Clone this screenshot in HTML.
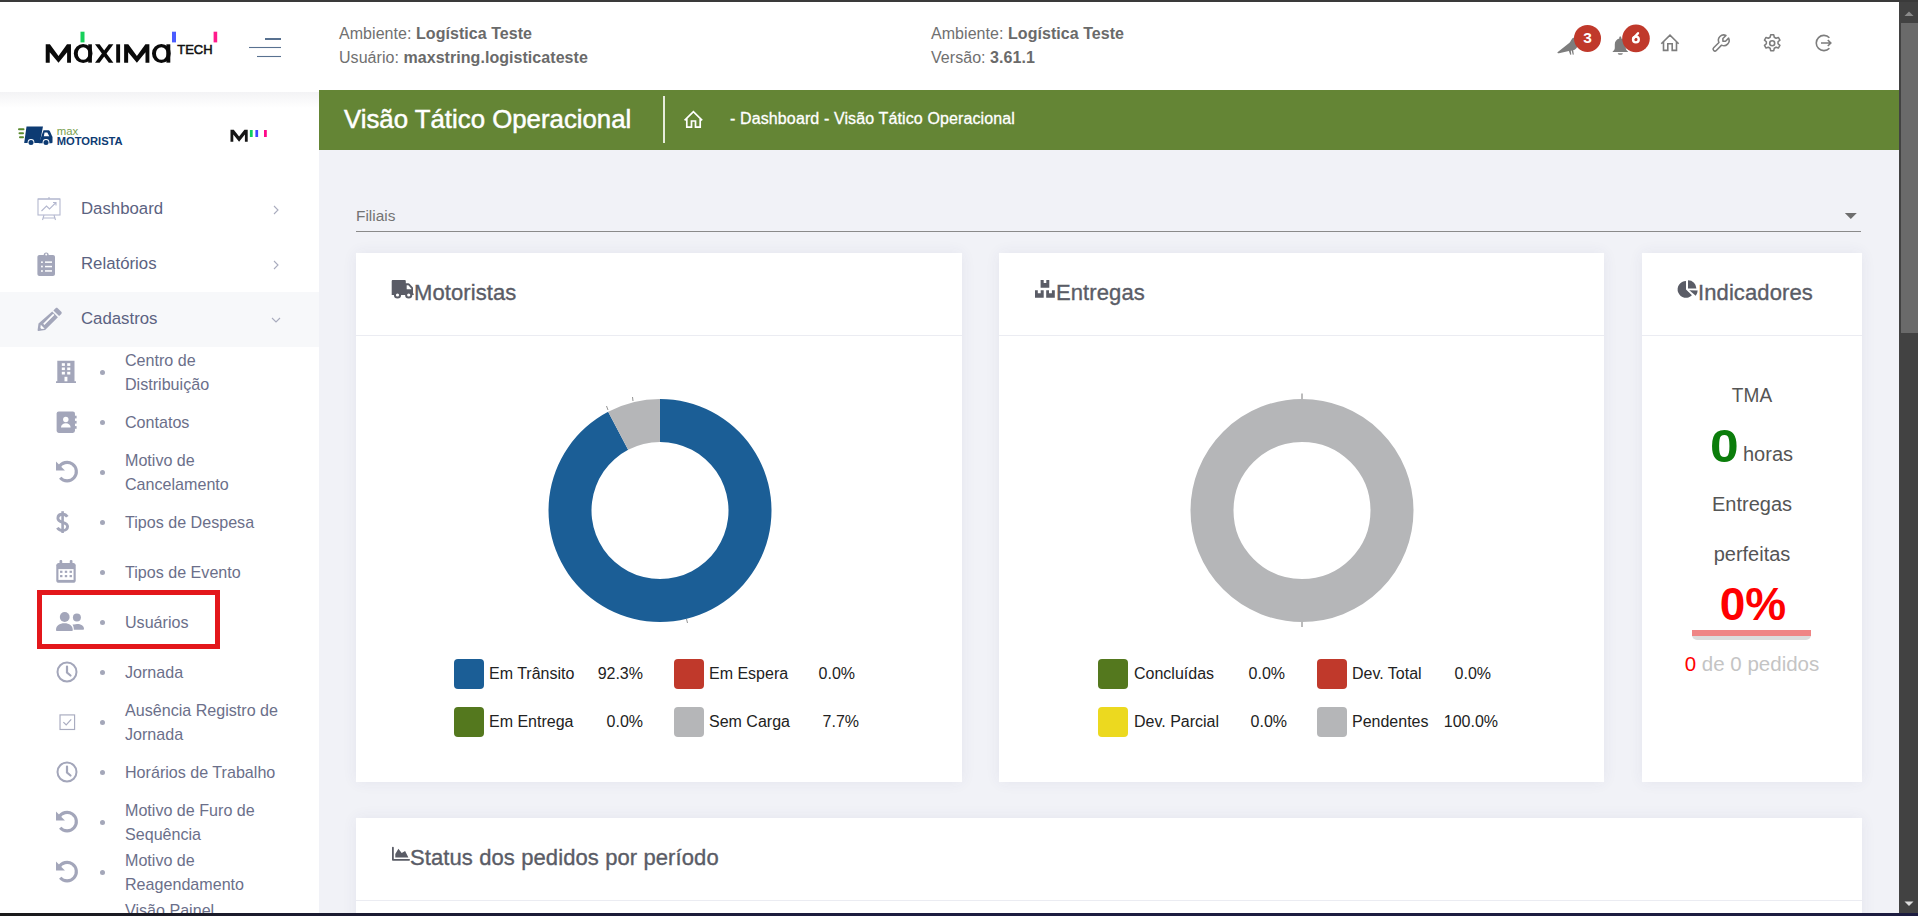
<!DOCTYPE html>
<html><head><meta charset="utf-8">
<style>
*{margin:0;padding:0;box-sizing:border-box}
html,body{width:1918px;height:916px;overflow:hidden;background:#f1f2f7;font-family:"Liberation Sans",sans-serif}
.a{position:absolute}
.t{position:absolute;white-space:nowrap;line-height:1}
#topb{left:0;top:0;width:1918px;height:2px;background:#3a3a3a}
#botb{left:0;top:913px;width:1918px;height:3px;background:linear-gradient(90deg,#1a1a1a 0,#1b1b30 300px,#1c1c40 900px)}
#hdr{left:0;top:2px;width:1899px;height:88px;background:#fff}
#side{left:0;top:90px;width:319px;height:823px;background:#fff}
#sb{left:1899px;top:2px;width:19px;height:911px;background:#424242}
#green{left:319px;top:90px;width:1580px;height:60px;background:#648535}
.card{position:absolute;background:#fff;box-shadow:0 0 14px rgba(60,60,110,.07)}
.hd{color:#707070;font-size:16px;letter-spacing:.05px}
.hd b{color:#6a6a6a;font-weight:bold}
.mi{color:#5b6281;font-size:16.8px}
.si{color:#6b6f8a;font-size:16.1px;line-height:24px}
.dot{position:absolute;width:5px;height:5px;border-radius:50%;background:#a4a7b9}
.ct{color:#5a5c66;font-size:22px;letter-spacing:.1px;-webkit-text-stroke:.35px #5a5c66}
.lg{color:#222;font-size:16px}
.sq{position:absolute;width:30px;height:30px;border-radius:4px}
</style></head><body>
<div id="topb" class="a"></div>
<div id="hdr" class="a"></div>
<div id="side" class="a"></div>

<!-- SIDEBAR -->
<div class="a" style="left:0;top:91.5px;width:319px;height:16px;background:linear-gradient(#f3f3f5,rgba(255,255,255,0))"></div>
<svg class="a" style="left:0;top:110px" width="319" height="50" viewBox="0 110 319 50">
 <g fill="#5a8a2e">
  <rect x="18" y="128.3" width="6.5" height="2" rx="1"/>
  <rect x="18.5" y="132.2" width="5.5" height="2" rx="1"/>
  <rect x="19" y="136.2" width="5" height="2" rx="1"/>
 </g>
 <g fill="#0d3b73">
  <path d="M26.5 126.5 h16.5 l-3.2 16.5 h-15.6 z"/>
  <path d="M43.5 130.3 h4.5 c1 0 1.6 .5 2 1.3 l2.5 5.5 v5 c0 .8-.5 1.2-1.2 1.2 h-12.5 z"/>
  <circle cx="31" cy="142.5" r="2.3"/>
  <circle cx="46" cy="142.5" r="2.3"/>
 </g>
 <path fill="#fff" d="M44.5 132.5 h2.8 l2 3.8 h-5.5 z"/>
 <g fill="#fff"><circle cx="31" cy="142.5" r="3.4"/><circle cx="46" cy="142.5" r="3.4"/></g><g fill="#0d3b73"><circle cx="31" cy="142.5" r="2.5"/><circle cx="46" cy="142.5" r="2.5"/></g>
 <text x="56.7" y="135.3" font-family="Liberation Sans" font-size="11.5" fill="#79a04e" textLength="21.5" lengthAdjust="spacingAndGlyphs">max</text>
 <text x="56.7" y="144.6" font-family="Liberation Sans" font-weight="bold" font-size="11.3" fill="#0d3b73" textLength="66" lengthAdjust="spacingAndGlyphs">MOTORISTA</text>
 <polygon fill="#161616" points="230.5,141.8 230.5,129.8 233.8,129.8 239.1,136.4 244.4,129.8 247.7,129.8 247.7,141.8 244.9,141.8 244.9,134.5 239.1,141.8 233.3,134.5 233.3,141.8"/>
 <rect x="249.9" y="130" width="2.8" height="7" fill="#10d060"/>
 <rect x="255.4" y="130" width="2.7" height="7" fill="#4048ff"/>
 <rect x="264" y="130" width="2.8" height="7" fill="#ff0a8a"/>
</svg>
<div class="a" style="left:0;top:292px;width:319px;height:55px;background:#f7f8fa"></div>
<!-- main menu icons -->
<svg class="a" style="left:0;top:180px" width="319" height="170" viewBox="0 180 319 170">
 <g fill="none" stroke="#b4b8cf" stroke-width="1.1">
  <rect x="38" y="199" width="22" height="16"/>
  <path d="M38 199 h22 M49 197 v2 M44 215 l-1.5 5 M54 215 l1.5 5 M43 218 h12 M41.5 211 l5 -5 l3 3 l6.5 -6.5 M53 202.5 h3 v3"/>
 </g>
 <g fill="#a3a6ba">
  <path d="M37.4 257 c0-1.1 .9-2 2-2 h4.3 a2.5 2.5 0 0 1 5 0 h4.3 c1.1 0 2 .9 2 2 v17 c0 1.1-.9 2-2 2 h-13.6 c-1.1 0-2-.9-2-2z"/>
 </g>
 <g fill="#fff">
  <rect x="41" y="261.2" width="1.9" height="1.9" rx=".9"/><rect x="45" y="261.4" width="7" height="1.5"/>
  <rect x="41" y="265.6" width="1.9" height="1.9" rx=".9"/><rect x="45" y="265.8" width="7" height="1.5"/>
  <rect x="41" y="270" width="1.9" height="1.9" rx=".9"/><rect x="45" y="270.2" width="7" height="1.5"/>
  <circle cx="46.2" cy="254.6" r="1"/>
 </g>
 <g transform="translate(1.2 -1.8)"><g fill="#a3a6ba">
  <path d="M56.5 310 l3.6 3.6 c.6.6 .6 1.5 0 2.1 l-2.2 2.2 l-5.7 -5.7 l2.2 -2.2 c.6-.6 1.5-.6 2.1 0z"/>
  <path d="M51 313.4 l5.7 5.7 l-12.8 12.8 l-6.6 .9 c-.6 .1-1-.3-.9-.9 l.9-6.6z"/>
 </g>
 <path fill="#fff" d="M39.6 326.6 l3.9 3.9 l-3.2 .4 l-1.1 -1.1z"/>
 <path fill="#fff" d="M42 325.5 l10 -10 l1.2 1.2 l-10 10z"/>
 </g>
 <g fill="none" stroke="#a9acbe" stroke-width="1.1">
  <path d="M274 206 l4 4 l-4 4"/>
  <path d="M274 261 l4 4 l-4 4"/>
  <path d="M272 318 l4 4 l4 -4"/>
 </g>
</svg>
<div class="t mi" style="left:81px;top:200.5px">Dashboard</div>
<div class="t mi" style="left:81px;top:255.5px">Relatórios</div>
<div class="t mi" style="left:81px;top:310.5px">Cadastros</div>
<div class="a" style="left:0;top:1px;width:319px;height:900px">
<!-- SUBMENU -->
<div class="t si" style="left:125px;top:347px;line-height:24px">Centro de<br>Distribuição</div>
<div class="dot" style="left:100px;top:369px"></div>
<div class="t si" style="left:125px;top:409px;line-height:24px">Contatos</div>
<div class="dot" style="left:100px;top:419px"></div>
<div class="t si" style="left:125px;top:447px;line-height:24px">Motivo de<br>Cancelamento</div>
<div class="dot" style="left:100px;top:469px"></div>
<div class="t si" style="left:125px;top:509px;line-height:24px">Tipos de Despesa</div>
<div class="dot" style="left:100px;top:519px"></div>
<div class="t si" style="left:125px;top:559px;line-height:24px">Tipos de Evento</div>
<div class="dot" style="left:100px;top:569px"></div>
<div class="t si" style="left:125px;top:609px;line-height:24px">Usuários</div>
<div class="dot" style="left:100px;top:619px"></div>
<div class="t si" style="left:125px;top:659px;line-height:24px">Jornada</div>
<div class="dot" style="left:100px;top:669px"></div>
<div class="t si" style="left:125px;top:697px;line-height:24px">Ausência Registro de<br>Jornada</div>
<div class="dot" style="left:100px;top:719px"></div>
<div class="t si" style="left:125px;top:759px;line-height:24px">Horários de Trabalho</div>
<div class="dot" style="left:100px;top:769px"></div>
<div class="t si" style="left:125px;top:797px;line-height:24px">Motivo de Furo de<br>Sequência</div>
<div class="dot" style="left:100px;top:819px"></div>
<div class="t si" style="left:125px;top:847px;line-height:24px">Motivo de<br>Reagendamento</div>
<div class="dot" style="left:100px;top:869px"></div>
<div class="t si" style="left:125px;top:897px;line-height:24px">Visão Painel</div>
<div class="dot" style="left:100px;top:918px"></div>
<svg class="a" style="left:0;top:340px" width="100" height="573" viewBox="0 340 100 573">
<g transform="translate(66 371)" fill="#a3a6ba"><path d="M-8.7 -11.3 h17.2 v20.6 h1.5 v1.6 h-20 v-1.6 h1.3z"/><g fill="#fff"><rect x="-4.2" y="-8.8" width="3.1" height="2.7"/><rect x="1.2" y="-8.8" width="3.1" height="2.7"/><rect x="-4.2" y="-4.5" width="3.1" height="2.6"/><rect x="1.2" y="-4.5" width="3.1" height="2.6"/><rect x="-4.2" y="-0.2" width="3.1" height="2.7"/><rect x="1.2" y="-0.2" width="3.1" height="2.7"/><rect x="-1.5" y="4.8" width="2.9" height="4.5"/></g></g>
<g transform="translate(65.8 421.2) scale(1.08)" fill="#a3a6ba"><rect x="-8.5" y="-10" width="17" height="20" rx="2"/><rect x="8.5" y="-6" width="1.5" height="2.5"/><rect x="8.5" y="-1.2" width="1.5" height="2.5"/><rect x="8.5" y="3.6" width="1.5" height="2.5"/><g fill="#fff"><circle cx="0" cy="-2.5" r="2.5"/><path d="M-4.5 5 c0-2.5 2-4 4.5-4 s4.5 1.5 4.5 4z"/></g></g>
<g transform="translate(66.5 471) scale(1.05)"><path fill="none" stroke="#a3a6ba" stroke-width="3" d="M-7.2 -4.5 A8.8 8.8 0 1 1 -6 5.5"/><path fill="#a3a6ba" d="M-10 -10 v8.5 h8.5z"/></g>
<g fill="none" stroke="#a3a6ba"><path stroke-width="2.9" d="M67.3 515.8 C66.3 514 64.6 513.2 62.6 513.2 C59.6 513.2 57.9 515 57.9 517.2 C57.9 522.4 67.6 520.2 67.6 525.6 C67.6 527.9 65.6 529.6 62.6 529.6 C60.4 529.6 58.5 528.6 57.4 526.8"/><path stroke-width="2.6" d="M62.6 510.2 V532"/></g>
<g transform="translate(66 570.8) scale(1.08)" fill="#a3a6ba"><path d="M-9 -6 c0-1.2 1-2.2 2.2-2.2 h13.6 c1.2 0 2.2 1 2.2 2.2 v14 c0 1.2-1 2.2-2.2 2.2 h-13.6 c-1.2 0-2.2-1-2.2-2.2z"/><rect x="-6" y="-11" width="2.5" height="4.5" rx="1"/><rect x="3.5" y="-11" width="2.5" height="4.5" rx="1"/><path fill="#fff" d="M-7 -2.5 h14 v10 h-14z"/><g><rect x="-5.5" y="-1" width="2.2" height="2"/><rect x="-1.1" y="-1" width="2.2" height="2"/><rect x="3.3" y="-1" width="2.2" height="2"/><rect x="-5.5" y="3" width="2.2" height="2"/><rect x="-1.1" y="3" width="2.2" height="2"/><rect x="3.3" y="3" width="2.2" height="2"/></g></g>
<g transform="translate(70 621)" fill="#a3a6ba"><circle cx="-5.3" cy="-5" r="4.9"/><path d="M-14 8 c0-4.3 3.5-6.7 8.4-6.7 s8.4 2.4 8.4 6.7 c0 .6-.5 1.1-1.1 1.1 h-14.6 c-.6 0-1.1-.5-1.1-1.1z"/><circle cx="6.9" cy="-4.5" r="4"/><path d="M4 2.6 c1-.4 2-.6 3-.6 c4 0 7 1.9 7 4.8 c0 .6-.5 1-1 1 h-9.2 c0-2-.2-3.7-1.3-5.2z"/></g>
<g transform="translate(67 671)"><circle r="9.5" fill="none" stroke="#a3a6ba" stroke-width="2"/><path fill="none" stroke="#a3a6ba" stroke-width="2.2" stroke-linecap="round" d="M0 -5.5 V0.5 L3.5 3.5"/></g>
<g transform="translate(67.3 721.2) scale(1.12)" fill="none" stroke="#a9acc0" stroke-width="1.05"><rect x="-6.5" y="-6.5" width="13" height="13"/><path d="M-3.5 0 l2.5 2.5 l4.5 -5"/></g>
<g transform="translate(67 771)"><circle r="9.5" fill="none" stroke="#a3a6ba" stroke-width="2"/><path fill="none" stroke="#a3a6ba" stroke-width="2.2" stroke-linecap="round" d="M0 -5.5 V0.5 L3.5 3.5"/></g>
<g transform="translate(66.5 821) scale(1.05)"><path fill="none" stroke="#a3a6ba" stroke-width="3" d="M-7.2 -4.5 A8.8 8.8 0 1 1 -6 5.5"/><path fill="#a3a6ba" d="M-10 -10 v8.5 h8.5z"/></g>
<g transform="translate(66.5 871) scale(1.05)"><path fill="none" stroke="#a3a6ba" stroke-width="3" d="M-7.2 -4.5 A8.8 8.8 0 1 1 -6 5.5"/><path fill="#a3a6ba" d="M-10 -10 v8.5 h8.5z"/></g>
<g transform="translate(70 922.5) scale(.95)" opacity=".8"><path fill="none" stroke="#a3a6ba" stroke-width="3" d="M-7.2 -4.5 A8.8 8.8 0 1 1 -6 5.5"/><path fill="#a3a6ba" d="M-10 -10 v8.5 h8.5z"/></g>
</svg>
</div>
<div class="a" style="left:37px;top:590px;width:183px;height:59px;border:5px solid #e3171b"></div>
<div id="green" class="a"></div>

<!-- LOGO -->
<svg class="a" style="left:0;top:0" width="320" height="90" viewBox="0 0 320 90">
 <g fill="#0a0a0a">
  <polygon points="45.73,62.65 45.73,44.3 49.9,44.3 58.5,55.9 67,44.3 70.96,44.3 70.96,62.65 67.1,62.65 67.1,52.3 58.5,62.65 49.74,52.3 49.74,62.65"/>
  <polygon transform="translate(78.4 0)" points="45.73,62.65 45.73,44.3 49.9,44.3 58.5,55.9 67,44.3 70.96,44.3 70.96,62.65 67.1,62.65 67.1,52.3 58.5,62.65 49.74,52.3 49.74,62.65"/>
  <path fill-rule="evenodd" d="M73.8 53.5 a9.35 9.45 0 1 0 18.7 0 a9.35 9.45 0 1 0 -18.7 0z M77.75 53.5 a5.4 6.3 0 1 0 10.8 0 a5.4 6.3 0 1 0 -10.8 0z"/>
  <rect x="88.2" y="44.3" width="3.7" height="18.35"/>
  <g transform="translate(78.2 0)">
  <path fill-rule="evenodd" d="M73.8 53.5 a9.35 9.45 0 1 0 18.7 0 a9.35 9.45 0 1 0 -18.7 0z M77.75 53.5 a5.4 6.3 0 1 0 10.8 0 a5.4 6.3 0 1 0 -10.8 0z"/>
  <rect x="88.2" y="44.3" width="3.9" height="18.35"/>
  </g>
  <rect x="116.2" y="44.3" width="3.9" height="18.35"/>
  <polygon points="95,44.3 99.6,44.3 113.4,62.65 108.8,62.65"/>
  <polygon points="108.8,44.3 113.4,44.3 99.6,62.65 95,62.65"/>
 </g>
 <rect x="80.5" y="31.7" width="4" height="10.7" fill="#17d05a"/>
 <rect x="172" y="31.7" width="4" height="10.7" fill="#4a5cff"/>
 <rect x="213.6" y="31.7" width="3.6" height="10.7" fill="#ff1a8c"/>
 <text x="177.3" y="54.2" font-family="Liberation Sans" font-weight="normal" font-size="13.4" fill="#111" stroke="#111" stroke-width="0.55" textLength="35.3" lengthAdjust="spacingAndGlyphs">TECH</text>
 <g stroke="#587190" stroke-width="1.1">
  <line x1="265" y1="39" x2="281" y2="39" stroke-width="2"/>
  <line x1="249" y1="47.5" x2="281" y2="47.5"/>
  <line x1="257" y1="56.5" x2="281" y2="56.5"/>
 </g>
</svg>
<div class="t hd" style="left:339px;top:26px">Ambiente: <b>Logística Teste</b></div>
<div class="t hd" style="left:339px;top:50px">Usuário: <b>maxstring.logisticateste</b></div>
<div class="t hd" style="left:931px;top:26px">Ambiente: <b>Logística Teste</b></div>
<div class="t hd" style="left:931px;top:50px">Versão: <b>3.61.1</b></div>

<!-- header icons -->
<svg class="a" style="left:1540px;top:15px" width="310" height="50" viewBox="1540 15 310 50">
 <g fill="#7d7d7d">
  <path d="M1557.5 52.2 L1569.5 42.8 C1570.5 41.5 1571.5 39.5 1572.5 38.3 C1573.3 37.3 1575.5 37 1576.5 38 L1577.5 46 C1577 48.3 1575.2 49.8 1573.2 50.3 L1573.8 54.6 L1572.8 54.8 L1571.6 50.6 L1570.8 50.8 L1571.3 54.6 L1570.2 54.8 L1568.9 50.9 L1559 53.3 C1558 53.5 1557.2 52.9 1557.5 52.2 Z"/>
  <path d="M1620.3 36.6 c-.6 0-1 .5-1 1 v.9 c-2.8 .8-4.5 3-4.5 5.8 v3.6 c0 1.4-.9 2.6-2.1 3.5 c-.3 .2-.2 .6 .2 .6 h14.8 c.4 0 .5-.4 .2-.6 c-1.2-.9-2.1-2.1-2.1-3.5 v-3.6 c0-2.8-1.7-5-4.5-5.8 v-.9 c0-.5-.4-1-1-1z"/><path d="M1617.8 53.3 h5 c0 1-1.1 1.5-2.5 1.5 s-2.5-.5-2.5-1.5z"/>
 </g>
 <circle cx="1587.5" cy="38.4" r="13.5" fill="#c0392b"/>
 <circle cx="1636" cy="38.4" r="13.8" fill="#c0392b"/>
 <text x="1587.6" y="43.4" text-anchor="middle" font-family="Liberation Sans" font-weight="bold" font-size="15.5" fill="#fff">3</text>
 <g fill="none" stroke="#fff" stroke-width="2.4"><circle cx="1635.9" cy="39.5" r="2.85"/><path stroke-linecap="round" d="M1638 33.2 L1633.2 38.6"/></g>
 <g fill="none" stroke="#7d7d7d" stroke-width="1.6">
  <path d="M1661.3 43.8 L1670 35.2 L1678.7 43.8 M1663.5 42 V50.4 H1667.8 V43.8 H1672.2 V50.4 H1676.5 V42"/>
  <path transform="translate(1731.7 32.4) scale(-0.88 0.88)" stroke-width="1.75" stroke-linecap="round" stroke-linejoin="round" d="M7 10h3v-3l-3.5 -3.5a6 6 0 0 1 8 8l6 6a2 2 0 0 1 -3 3l-6 -6a6 6 0 0 1 -8 -8l3.5 3.5"/>
  <path d="M1829.4 37.8 A7.6 7.6 0 1 0 1829.4 48.2 M1821 43 H1830.8 M1827.8 40 L1830.8 43 L1827.8 46"/>
  <circle cx="1772.2" cy="43.2" r="2.5"/>
 </g>
 <path transform="translate(1772.2 43.2) scale(1.1) translate(-1772 -43)" fill="none" stroke="#7d7d7d" stroke-width="1.4" stroke-linejoin="round" d="M1770.6 35.4 h2.8 l0.5 2.2 l1.6 0.9 l2.1 -0.7 l1.4 2.4 l-1.7 1.5 v1.8 l1.7 1.5 l-1.4 2.4 l-2.1 -0.7 l-1.6 0.9 l-0.5 2.2 h-2.8 l-0.5 -2.2 l-1.6 -0.9 l-2.1 0.7 l-1.4 -2.4 l1.7 -1.5 v-1.8 l-1.7 -1.5 l1.4 -2.4 l2.1 0.7 l1.6 -0.9 z"/>
</svg>

<!-- CONTENT -->
<div class="t" style="left:344px;top:106.5px;color:#fff;font-size:25.8px;-webkit-text-stroke:.5px #fff">Visão Tático Operacional</div>
<div class="a" style="left:663px;top:96px;width:1.5px;height:47px;background:#e6ecdc"></div>
<svg class="a" style="left:680px;top:105px" width="26" height="26" viewBox="0 0 26 26"><path fill="none" stroke="#fff" stroke-width="1.7" stroke-linejoin="miter" d="M4.6 15.4 L13.4 6.6 L22.2 15.4 M6.8 13.4 V22.2 H11.5 V16 H15.5 V22.2 H20.2 V13.4"/></svg>
<div class="t" style="left:730px;top:111.3px;color:#fff;font-size:16px;letter-spacing:.12px;-webkit-text-stroke:.3px #fff">- Dashboard - Visão Tático Operacional</div>
<div class="t" style="left:356px;top:207.5px;color:#737373;font-size:15.4px">Filiais</div>
<div class="a" style="left:356px;top:230.5px;width:1505px;height:1.5px;background:#8a8a8a"></div>
<svg class="a" style="left:1840px;top:208px" width="20" height="16"><path d="M4.8 5 h12 l-6 6z" fill="#6e6e6e"/></svg>

<div class="card" style="left:356px;top:253px;width:606px;height:529px"></div>
<div class="card" style="left:999px;top:253px;width:605px;height:529px"></div>
<div class="card" style="left:1642px;top:253px;width:220px;height:529px"></div>
<div class="card" style="left:356px;top:818px;width:1506px;height:120px"></div>
<div class="a" style="left:356px;top:335px;width:606px;height:1px;background:#ebecf2"></div>
<div class="a" style="left:999px;top:335px;width:605px;height:1px;background:#ebecf2"></div>
<div class="a" style="left:1642px;top:335px;width:220px;height:1px;background:#ebecf2"></div>
<div class="a" style="left:356px;top:900px;width:1506px;height:1px;background:#ebecf2"></div>

<!-- card titles -->
<svg class="a" style="left:385px;top:275px" width="32" height="30" viewBox="385 275 32 30"><g fill="#5a5c66"><path d="M391.7 281.2 c0-.7 .5-1.2 1.2-1.2 h11.8 c.6 0 1.1 .5 1.1 1.1 v2.2 h2.6 c.4 0 .8 .2 1.1 .5 l3 3.2 c.3 .3 .5 .7 .5 1.1 v5.4 h.7 v1.6 h-22 z"/><circle cx="397.5" cy="295" r="3.6"/><circle cx="408.7" cy="295" r="3.6"/></g><g fill="#fff"><circle cx="397.5" cy="295" r="1.6"/><circle cx="408.7" cy="295" r="1.6"/><path d="M406.7 285.3 h1.6 l3 3.3 v.7 h-4.6z"/></g></svg>
<div class="t ct" style="left:414px;top:282px">Motoristas</div>
<svg class="a" style="left:1030px;top:275px" width="30" height="30" viewBox="1030 275 30 30"><g fill="#5a5c66"><path d="M1040.6 280.1 h3.1 v3 h2.6 v-3 h3 v7.7 h-8.7z"/><path d="M1035 290.2 h2.8 v3 h2.9 v-3 h3 v7.6 h-8.7z"/><path d="M1046.2 290.2 h2.8 v3 h2.9 v-3 h2.9 v7.6 h-8.6z"/></g></svg>
<div class="t ct" style="left:1056px;top:282px">Entregas</div>
<svg class="a" style="left:1670px;top:275px" width="35" height="30" viewBox="1670 275 35 30"><g fill="#5a5c66"><path d="M1686 289.4 L1686 281 A8.4 8.4 0 1 0 1691.94 295.34 Z"/><path d="M1688 288.6 V280.2 A8.4 8.4 0 0 1 1696.4 288.6 Z"/><path d="M1689.3 290.3 L1697.69 290.59 A8.4 8.4 0 0 1 1695.73 295.7 Z"/></g></svg>
<div class="t ct" style="left:1698px;top:282px">Indicadores</div>
<svg class="a" style="left:385px;top:840px" width="30" height="30" viewBox="385 840 30 30"><g fill="#5a5c66"><path d="M392 847.6 c0-.4 .4-.8 .9-.8 s.9 .4 .9 .8 V858.9 H409.2 c.4 0 .8 .4 .8 .9 s-.4 .9-.8 .9 H392.8 c-.4 0-.8-.4-.8-.8z"/><path d="M395.3 857.4 V854.1 L398.4 848.8 L401.7 853 L405.1 850.9 L408.4 857.4z"/></g></svg>
<div class="t ct" style="left:410px;top:847px">Status dos pedidos por período</div>
<svg class="a" style="left:540px;top:390px" width="240" height="240" viewBox="540 390 240 240"><path fill="#1b5e96" d="M660.00 399.00 A111.5 111.5 0 1 1 608.14 411.80 L628.14 449.86 A68.5 68.5 0 1 0 660.00 442.00Z"/><path fill="#b5b6b8" d="M608.14 411.80 A111.5 111.5 0 0 1 659.98 399.00 L659.99 442.00 A68.5 68.5 0 0 0 628.14 449.86Z"/><g stroke="#777" stroke-width="0.8"><line x1="632.5" y1="397" x2="633" y2="401"/><line x1="606.5" y1="406" x2="608" y2="410"/><line x1="686.5" y1="619" x2="687.5" y2="623"/></g></svg><svg class="a" style="left:1180px;top:380px" width="250" height="250" viewBox="1180 380 250 250"><circle cx="1302" cy="510.5" r="90" fill="none" stroke="#b5b6b8" stroke-width="43"/><g stroke="#555" stroke-width="0.8"><line x1="1302" y1="393.5" x2="1302" y2="399"/><line x1="1302" y1="622" x2="1302" y2="627"/></g></svg><div class="sq" style="left:454px;top:659px;background:#1b5e96"></div><div class="t lg" style="left:489px;top:666px">Em Trânsito</div><div class="t lg" style="left:643px;top:666px;text-align:right;width:0;direction:rtl">92.3%</div><div class="sq" style="left:674px;top:659px;background:#c0392b"></div><div class="t lg" style="left:709px;top:666px">Em Espera</div><div class="t lg" style="left:855px;top:666px;text-align:right;width:0;direction:rtl">0.0%</div><div class="sq" style="left:454px;top:707px;background:#54781e"></div><div class="t lg" style="left:489px;top:714px">Em Entrega</div><div class="t lg" style="left:643px;top:714px;text-align:right;width:0;direction:rtl">0.0%</div><div class="sq" style="left:674px;top:707px;background:#b5b6b8"></div><div class="t lg" style="left:709px;top:714px">Sem Carga</div><div class="t lg" style="left:859px;top:714px;text-align:right;width:0;direction:rtl">7.7%</div><div class="sq" style="left:1098px;top:659px;background:#54781e"></div><div class="t lg" style="left:1134px;top:666px">Concluídas</div><div class="t lg" style="left:1285px;top:666px;text-align:right;width:0;direction:rtl">0.0%</div><div class="sq" style="left:1317px;top:659px;background:#c0392b"></div><div class="t lg" style="left:1352px;top:666px">Dev. Total</div><div class="t lg" style="left:1491px;top:666px;text-align:right;width:0;direction:rtl">0.0%</div><div class="sq" style="left:1098px;top:707px;background:#ecd91f"></div><div class="t lg" style="left:1134px;top:714px">Dev. Parcial</div><div class="t lg" style="left:1287px;top:714px;text-align:right;width:0;direction:rtl">0.0%</div><div class="sq" style="left:1317px;top:707px;background:#b5b6b8"></div><div class="t lg" style="left:1352px;top:714px">Pendentes</div><div class="t lg" style="left:1498px;top:714px;text-align:right;width:0;direction:rtl">100.0%</div>
<div class="t" style="left:1642px;top:385px;width:220px;text-align:center;color:#555;font-size:20.5px;transform:scaleX(.93)">TMA</div>
<div class="t" style="left:1710px;top:422.5px;color:#0b7d0b;font-size:46px;font-weight:bold;transform:scaleX(1.12);transform-origin:0 0">0</div>
<div class="t" style="left:1743px;top:444px;color:#555;font-size:20px">horas</div>
<div class="t" style="left:1642px;top:494px;width:220px;text-align:center;color:#555;font-size:20px">Entregas</div>
<div class="t" style="left:1642px;top:544px;width:220px;text-align:center;color:#555;font-size:20px">perfeitas</div>
<div class="t" style="left:1643px;top:581px;width:220px;text-align:center;color:#f00;font-size:46px;font-weight:bold">0%</div>
<div class="a" style="left:1692px;top:630px;width:119px;height:10px;border-radius:0 0 5px 5px;background:#dcdcdc"></div>
<div class="a" style="left:1692px;top:630px;width:119px;height:6px;background:#ef8585"></div>
<div class="t" style="left:1642px;top:654px;width:220px;text-align:center;color:#c4c4c4;font-size:20.5px"><span style="color:#f00">0</span> de 0 pedidos</div>

<div id="sb" class="a"></div>
<div class="a" style="left:1901px;top:23px;width:17px;height:310px;background:#6a6a6a"></div>
<svg class="a" style="left:1899px;top:2px" width="19" height="911"><path d="M5.5 14 h9 l-4.5 -4.5z" fill="#8a8a8a"/><path d="M5.5 899.5 h9 l-4.5 4.5z" fill="#dcdcdc"/></svg>
<div id="botb" class="a"></div>
</body></html>
